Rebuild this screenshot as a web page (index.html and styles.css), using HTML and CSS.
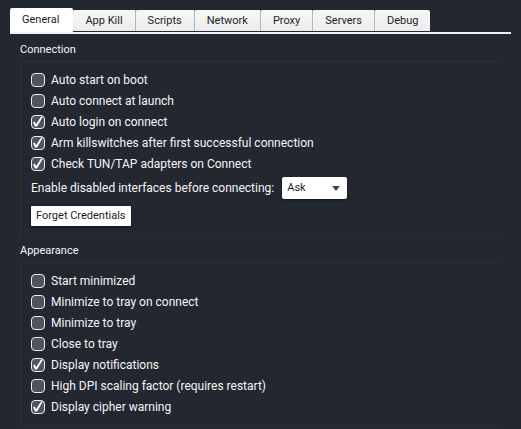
FILE: index.html
```html
<!DOCTYPE html>
<html lang="en">
<head>
<meta charset="utf-8">
<title>Settings</title>
<link rel="stylesheet" href="styles.css">
</head>
<body>
<nav class="tabs" role="tablist">
  <button class="tab tab-active" type="button" role="tab" aria-selected="true">General</button>
  <button class="tab" type="button" role="tab">App Kill</button>
  <button class="tab" type="button" role="tab">Scripts</button>
  <button class="tab" type="button" role="tab">Network</button>
  <button class="tab" type="button" role="tab">Proxy</button>
  <button class="tab" type="button" role="tab">Servers</button>
  <button class="tab" type="button" role="tab">Debug</button>
</nav>
<main class="panel">
  <section class="group">
    <h2 class="group-title">Connection</h2>
    <div class="group-box">
      <label class="row"><input class="check" type="checkbox">Auto start on boot</label>
      <label class="row"><input class="check" type="checkbox">Auto connect at launch</label>
      <label class="row"><input class="check" type="checkbox" checked>Auto login on connect</label>
      <label class="row"><input class="check" type="checkbox" checked>Arm killswitches after first successful connection</label>
      <label class="row"><input class="check" type="checkbox" checked>Check TUN/TAP adapters on Connect</label>
      <div class="field">
        <label for="interfaces">Enable disabled interfaces before connecting:</label>
        <span class="select-wrap">
          <select class="select" id="interfaces"><option>Ask</option></select>
          <svg class="arrow" viewBox="0 0 8 5" aria-hidden="true"><path d="M0 0h8L4 5z"/></svg>
        </span>
      </div>
      <button class="button" type="button">Forget Credentials</button>
    </div>
  </section>
  <section class="group">
    <h2 class="group-title">Appearance</h2>
    <div class="group-box">
      <label class="row"><input class="check" type="checkbox">Start minimized</label>
      <label class="row"><input class="check" type="checkbox">Minimize to tray on connect</label>
      <label class="row"><input class="check" type="checkbox">Minimize to tray</label>
      <label class="row"><input class="check" type="checkbox">Close to tray</label>
      <label class="row"><input class="check" type="checkbox" checked>Display notifications</label>
      <label class="row"><input class="check" type="checkbox">High DPI scaling factor (requires restart)</label>
      <label class="row"><input class="check" type="checkbox" checked>Display cipher warning</label>
    </div>
  </section>
</main>
</body>
</html>
```
FILE: styles.css
```css
* {
  box-sizing: border-box;
}

body {
  margin: 0;
  padding: 8px 10px 0;
  background: #23272f;
  color: #f4f5f7;
  font: 12px/16px Roboto, "Liberation Sans", sans-serif;
}

button,
select {
  font: inherit;
  font-size: 11px;
  color: #1c1e22;
}

.tabs {
  display: flex;
  align-items: flex-start;
  padding-top: 2px;
  border-bottom: 2px solid #eef0f2;
  height: 26px;
}

.tab {
  height: 21px;
  padding: 0 12px;
  border: 0;
  border-right: 1px solid #b4b6ba;
  border-radius: 1px 1px 0 0;
  background: linear-gradient(#f6f6f7, #ededee);
}

.tab:last-child {
  border-right: 0;
  border-radius: 1px 2px 0 0;
}

.tab-active {
  height: 24px;
  margin-top: -2px;
  padding: 0 13px 0 12px;
  border-right-color: #fff;
  border-radius: 2px 2px 0 0;
  background: #fff;
}

.panel {
  padding: 8px 10px 0;
}

.group-title {
  margin: 0 0 3px;
  font-size: 11px;
  font-weight: 400;
  line-height: 16px;
}

.group-box {
  margin-bottom: 5px;
  padding: 7px 10px;
  border: 1px solid;
  border-color: #2c3038 #23272f #292d35 #30343c;
  border-radius: 2px;
}

.row {
  display: flex;
  align-items: center;
  gap: 6px;
  width: fit-content;
  height: 21px;
}

.check {
  display: grid;
  place-items: center;
  appearance: none;
  width: 14px;
  height: 14px;
  margin: 0;
  border: 1px solid #eceef1;
  border-radius: 4px;
  background: #50535b;
}

.check:checked::before {
  content: "";
  width: 12px;
  height: 12px;
  background: #fff;
  clip-path: polygon(1px 7px, 3px 6px, 4px 9px, 9px 1px, 11px 1px, 5px 11px, 3px 11px);
}

.field {
  display: flex;
  align-items: center;
  gap: 8px;
  margin: 3px 0 7px;
}

.select-wrap {
  display: grid;
  align-items: center;
}

.select {
  grid-area: 1 / 1;
  appearance: none;
  width: 65px;
  height: 22px;
  padding: 0 5px;
  border: 0;
  border-radius: 2px;
  background: #fff;
  box-shadow: 0 1px 2px #0f1217;
}

.arrow {
  grid-area: 1 / 1;
  justify-self: end;
  width: 8px;
  height: 5px;
  margin-right: 7px;
  fill: #45484e;
  pointer-events: none;
}

.button {
  display: block;
  height: 20px;
  margin-bottom: 4px;
  padding: 0 5px;
  border: 0;
  border-radius: 1px;
  background: #fff;
  box-shadow: 0 1px 2px #0f1217;
}
```
